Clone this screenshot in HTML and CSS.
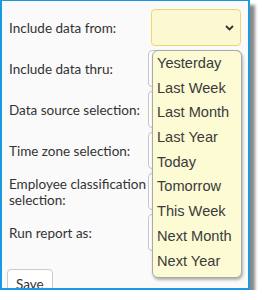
FILE: index.html
```html
<!DOCTYPE html>
<html lang="en">
<head>
    <meta charset="UTF-8">
    <title>Report options</title>
    <link rel="stylesheet" href="styles.css">
</head>
<body>
<div class="window">
    <form class="reportForm">
        <div class="row">
            <label>Include data from:</label>
            <div class="select active">
                <svg width="9" height="6" viewBox="0 0 9 6"><path d="M1 1 L4.5 4.5 L8 1" fill="none" stroke="#333" stroke-width="1.8"/></svg>
            </div>
        </div>
        <div class="row">
            <label>Include data thru:</label>
            <div class="select"></div>
        </div>
        <div class="row">
            <label>Data source selection:</label>
            <div class="select"></div>
        </div>
        <div class="row">
            <label>Time zone selection:</label>
            <div class="select"></div>
        </div>
        <div class="row">
            <label>Employee classification selection:</label>
            <div class="select"></div>
        </div>
        <div class="row">
            <label>Run report as:</label>
            <div class="select"></div>
        </div>
        <div class="actions">
            <button type="button" class="saveBtn">Save</button>
        </div>
    </form>
    <ul class="dropList">
        <li>Yesterday</li>
        <li>Last Week</li>
        <li>Last Month</li>
        <li>Last Year</li>
        <li>Today</li>
        <li>Tomorrow</li>
        <li>This Week</li>
        <li>Next Month</li>
        <li>Next Year</li>
    </ul>
</div>
</body>
</html>
```

FILE: styles.css
```css
body{
    margin:0;
    background:#fff;
}
.window{
    position: relative;
    width:250px;
    height:290px;
    box-sizing: border-box;
    border:2px solid #1b9ae0;
    border-top-width:1px;
    background:#fafafa;
    box-shadow: 5px 5px 3px #8a8a8a;
    overflow: hidden;
}
.reportForm{
    padding:8px 7px 0 7px;
    font-family: Lato, "Open Sans", sans-serif;
    font-size:13.5px;
    color:#333;
}
.row{
    display:flex;
    align-items:center;
    justify-content: space-between;
    height:37px;
    margin-bottom:4px;
}
.row label{
    width:143px;
    line-height:16px;
}
.select{
    width:88px;
    height:35px;
    border:1px solid #c6c6c6;
    border-radius:4px;
    background:#fff;
    display:flex;
    align-items:center;
    justify-content:flex-end;
    padding-right:6px;
    box-sizing: content-box;
}
.select.active{
    background:#fcf9d2;
    border-color:#f1d46d;
    width:82px;
}
.actions{
    margin-top:18px;
}
.saveBtn{
    font-family: Lato, "Open Sans", sans-serif;
    font-size:13.5px;
    color:#333;
    background:#fff;
    border:1px solid #ccc;
    border-radius:4px;
    padding:6px 8px;
    margin-left:-2px;
}
.dropList{
    position:absolute;
    left:150px;
    top:49px;
    width:88px;
    height:226px;
    margin:0;
    padding:0;
    list-style:none;
    background:#fcfbd4;
    border:1px solid #a9a9a9;
    border-radius:6px;
    box-shadow: 1px 2px 3px rgba(0,0,0,0.3);
    font-family: "Liberation Sans", Arial, sans-serif;
    font-size:14.6px;
    color:#3a3a3a;
}
.dropList li{
    padding-left:4px;
    height:24.7px;
    line-height:24.7px;
}
```
